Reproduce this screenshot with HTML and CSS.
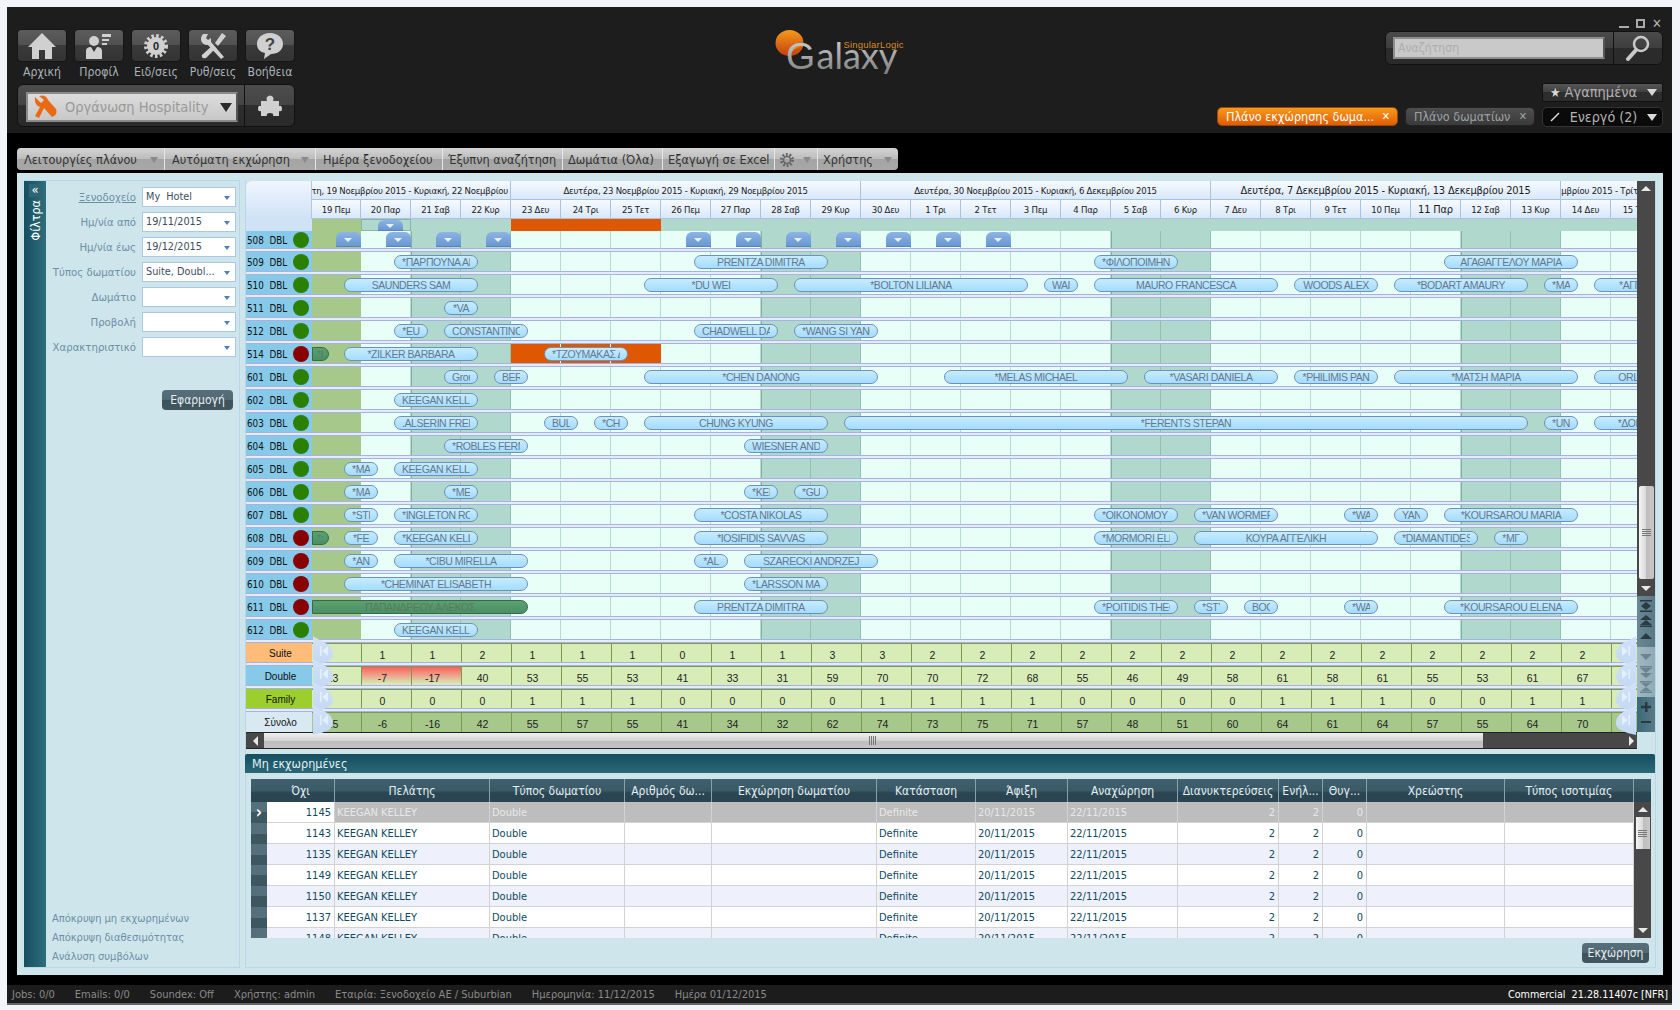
FILE: index.html
```html
<!DOCTYPE html>
<html lang="el">
<head>
<meta charset="utf-8">
<title>Galaxy</title>
<link rel="stylesheet" href="styles.css">
</head>
<body>
<div class="window">
  <header class="top">
    <div class="top-left">
      <nav class="nav">
        <a class="nav-item"><span class="nav-btn"><svg viewBox="0 0 30 28" width="30" height="28"><path class="ico" d="M15 1 L29 15 L25 15 L25 27 L18 27 L18 18 L12 18 L12 27 L5 27 L5 15 L1 15 Z"/></svg></span>Αρχική</a>
        <a class="nav-item"><span class="nav-btn"><svg viewBox="0 0 30 28" width="30" height="28"><circle class="ico" cx="10" cy="9" r="5"/><path class="ico" d="M2 27 L2 19 Q2 15 7 15 L10 20 L13 15 Q18 15 18 19 L18 27 Z"/><path class="ico" d="M18 2h9v3h-9zM18 7h7v2h-7zM18 11h5v2h-5z"/></svg></span>Προφίλ</a>
        <a class="nav-item"><span class="nav-btn"><svg viewBox="0 0 30 28" width="30" height="28"><circle class="teeth" cx="15" cy="14" r="10"/><circle class="ico" cx="15" cy="14" r="9"/><text class="gear-num" x="15" y="18" text-anchor="middle">0</text></svg></span>Ειδ/σεις</a>
        <a class="nav-item"><span class="nav-btn"><svg viewBox="0 0 30 28" width="30" height="28"><path class="ico" d="M5 2 L10 2 L8 6 L10 8 L13 6 L13 10 L26 25 L23 27 L10 13 Q4 13 3 8 Q3 4 5 2 Z"/><path class="ico" d="M24 1 L28 4 L20 14 L17 11 Z M15 13 L18 16 L8 26 Q5 27 4 25 Q3 23 5 22 Z"/></svg></span>Ρυθ/σεις</a>
        <a class="nav-item"><span class="nav-btn"><svg viewBox="0 0 30 28" width="30" height="28"><path class="ico" d="M15 1 C23 1 28 6 28 12 C28 18 23 22 16 22 L9 27 L10 21 C5 20 2 17 2 12 C2 6 7 1 15 1 Z"/><text class="help" x="15" y="18" text-anchor="middle">?</text></svg></span>Βοήθεια</a>
      </nav>
      <div class="module">
        <div class="module-select">
          <svg viewBox="0 0 26 24" width="26" height="24"><path class="wrench" d="M3 2 L9 8 L12 5 L7 1 Q14 -1 16 5 L24 14 Q26 20 20 22 L12 13 L7 23 L3 21 L8 12 Q2 10 3 2 Z"/></svg>
          <span class="module-name">Οργάνωση Hospitality</span>
          <span class="module-caret"></span>
        </div>
        <div class="module-plugin"><svg viewBox="0 0 24 22" width="24" height="22"><path class="ico" d="M9 2 Q12 -1 15 2 Q16 4 15 6 L21 6 L21 11 Q24 10 24 14 Q24 17 21 16 L21 21 L15 21 Q16 18 12 18 Q8 18 9 21 L3 21 L3 16 Q0 17 0 14 Q0 10 3 11 L3 6 L9 6 Q8 4 9 2 Z"/></svg></div>
      </div>
    </div>
    <div class="logo">
      <svg viewBox="0 0 135 46" width="135" height="46">
        <defs>
          <linearGradient id="sun" x1="0" y1="0" x2="0" y2="1"><stop offset="0" stop-color="#f59a1c"/><stop offset="1" stop-color="#c2400c"/></linearGradient>
          <linearGradient id="steel" x1="0" y1="0" x2="0" y2="1"><stop offset="0" stop-color="#d8d8d8"/><stop offset="1" stop-color="#777"/></linearGradient>
        </defs>
        <ellipse cx="16.500" cy="15" rx="14" ry="13" fill="url(#sun)"/>
        <path d="M17 25 Q25 15 36 18" class="logo-arc"/>
        <text class="logo-g" x="13" y="41" fill="url(#steel)">G</text>
        <text class="logo-word" x="43.500" y="41" fill="url(#steel)">alaxy</text>
        <text class="logo-brand" x="70.500" y="20">SingularLogic</text>
      </svg>
    </div>
    <div class="top-right">
      <div class="winctl"><span class="wc-min"></span><span class="wc-max"></span><span class="wc-close">✕</span></div>
      <div class="search">
        <div class="search-input">Αναζήτηση</div>
        <div class="search-btn"><svg viewBox="0 0 26 26" width="26" height="26"><circle cx="16" cy="9" r="7" class="lens"/><path d="M11 15 L3 24" class="lens-h"/></svg></div>
      </div>
      <div class="fav"><span class="star">★</span><span class="fav-name">Αγαπημένα</span><span class="caret-w"></span></div>
      <div class="tabs">
        <div class="tab tab-on">Πλάνο εκχώρησης δωμα...<span class="tab-x">✕</span></div>
        <div class="tab">Πλάνο δωματίων<span class="tab-x">✕</span></div>
        <div class="active-tab"><svg viewBox="0 0 10 10" width="10" height="10"><path d="M1 9 L9 1" class="pen"/></svg><span>Ενεργό (2)</span><span class="caret-w"></span></div>
      </div>
    </div>
  </header>

  <div class="menu">
    <div class="menu-item">Λειτουργίες πλάνου<span class="caret-g"></span></div>
    <div class="menu-item">Αυτόματη εκχώρηση<span class="caret-g"></span></div>
    <div class="menu-item">Ημέρα ξενοδοχείου</div>
    <div class="menu-item">Έξυπνη αναζήτηση</div>
    <div class="menu-item">Δωμάτια (Όλα)</div>
    <div class="menu-item">Εξαγωγή σε Excel</div>
    <div class="menu-item"><svg viewBox="0 0 14 14" width="14" height="14"><circle class="gear-t" cx="7" cy="7" r="5.500"/><circle class="gear-r" cx="7" cy="7" r="3.500"/></svg><span class="caret-g"></span></div>
    <div class="menu-item">Χρήστης<span class="caret-g"></span></div>
  </div>

  <main class="content">
    <aside class="filters">
      <div class="strip"><span class="strip-arrows">«</span><span class="strip-title">Φίλτρα</span></div>
      <div class="filter-panel">
        <div class="form">
          <a class="flabel link">Ξενοδοχείο</a><div class="fselect">My&nbsp; Hotel</div>
          <span class="flabel">Ημ/νία από</span><div class="fselect">19/11/2015</div>
          <span class="flabel">Ημ/νία έως</span><div class="fselect">19/12/2015</div>
          <span class="flabel">Τύπος δωματίου</span><div class="fselect">Suite, Doubl...</div>
          <span class="flabel">Δωμάτιο</span><div class="fselect"></div>
          <span class="flabel">Προβολή</span><div class="fselect"></div>
          <span class="flabel">Χαρακτηριστικό</span><div class="fselect"></div>
        </div>
        <button class="apply btn">Εφαρμογή</button>
        <div class="links">
          <a>Απόκρυψη μη εκχωρημένων</a>
          <a>Απόκρυψη διαθεσιμότητας</a>
          <a>Ανάλυση συμβόλων</a>
        </div>
      </div>
    </aside>

    <section class="main">
      <div class="sched">
        <div class="board">
          <div class="cal-head">
            <div class="corner"></div>
            <div class="week w4"><span>Πέμπτη, 19 Νοεμβρίου 2015 - Κυριακή, 22 Νοεμβρίου 2015</span></div>
            <div class="week w7"><span>Δευτέρα, 23 Νοεμβρίου 2015 - Κυριακή, 29 Νοεμβρίου 2015</span></div>
            <div class="week w7"><span>Δευτέρα, 30 Νοεμβρίου 2015 - Κυριακή, 6 Δεκεμβρίου 2015</span></div>
            <div class="week w7 hot"><span>Δευτέρα, 7 Δεκεμβρίου 2015 - Κυριακή, 13 Δεκεμβρίου 2015</span></div>
            <div class="week w2"><span>Δευτέρα, 14 Δεκεμβρίου 2015 - Τρίτη, 15 Δεκεμβρίου 2015</span></div>
            <div class="day">19 Πεμ</div><div class="day">20 Παρ</div><div class="day">21 Σαβ</div><div class="day">22 Κυρ</div>
            <div class="day">23 Δευ</div><div class="day">24 Τρι</div><div class="day">25 Τετ</div><div class="day">26 Πεμ</div><div class="day">27 Παρ</div><div class="day">28 Σαβ</div><div class="day">29 Κυρ</div>
            <div class="day">30 Δευ</div><div class="day">1 Τρι</div><div class="day">2 Τετ</div><div class="day">3 Πεμ</div><div class="day">4 Παρ</div><div class="day">5 Σαβ</div><div class="day">6 Κυρ</div>
            <div class="day">7 Δευ</div><div class="day">8 Τρι</div><div class="day">9 Τετ</div><div class="day">10 Πεμ</div><div class="day hot">11 Παρ</div><div class="day">12 Σαβ</div><div class="day">13 Κυρ</div>
            <div class="day">14 Δευ</div><div class="day">15 Τρι</div>
          </div>

          <div class="lanes">
            <div class="cols">
              <i class="past"></i><i></i><i class="we"></i><i class="we"></i><i></i><i></i><i></i><i></i><i></i><i class="we"></i><i class="we"></i><i></i><i></i><i></i><i></i><i></i><i class="we"></i><i class="we"></i><i></i><i></i><i></i><i></i><i></i><i class="we"></i><i class="we"></i><i></i><i></i>
            </div>
            <div class="rows">
              <div class="row row-first">
                <div class="room"><span>508&nbsp; DBL</span><em class="dot ok"></em></div>
                <div class="track">
                  <div class="strip-band"></div>
                  <div class="strip-past"></div>
                  <div class="strip-hold"></div>
                  <div class="strip-busy"></div>
                  <b class="drop drop-up" style="--d:1"></b>
                  <b class="drop" style="--d:0"></b><b class="drop" style="--d:1"></b><b class="drop" style="--d:2"></b><b class="drop" style="--d:3"></b>
                  <b class="drop" style="--d:7"></b><b class="drop" style="--d:8"></b><b class="drop" style="--d:9"></b><b class="drop" style="--d:10"></b><b class="drop" style="--d:11"></b><b class="drop" style="--d:12"></b><b class="drop" style="--d:13"></b>
                </div>
              </div>
              <div class="row"><div class="room"><span>509&nbsp; DBL</span><em class="dot ok"></em></div><div class="track">
                <span class="pill" style="--s:1;--e:2">*ΠΑΡΠΟΥΝΑ ΑΙ</span><span class="pill" style="--s:7;--e:9">PRENTZA DIMITRA</span><span class="pill" style="--s:15;--e:16">*ΦΙΛΟΠΟΙΜΗΝ</span><span class="pill" style="--s:22;--e:24">ΑΓΑΘΑΓΓΕΛΟΥ ΜΑΡΙΑ</span>
              </div></div>
              <div class="row"><div class="room"><span>510&nbsp; DBL</span><em class="dot ok"></em></div><div class="track">
                <span class="pill" style="--s:0;--e:2">SAUNDERS SAM</span><span class="pill" style="--s:6;--e:8">*DU WEI</span><span class="pill" style="--s:9;--e:13">*BOLTON LILIANA</span><span class="pill" style="--s:14;--e:14">WAI</span><span class="pill" style="--s:15;--e:18">MAURO FRANCESCA</span><span class="pill" style="--s:19;--e:20">WOODS ALEX</span><span class="pill" style="--s:21;--e:23">*BODART AMAURY</span><span class="pill" style="--s:24;--e:24">*ΜΑ</span><span class="pill" style="--s:25;--e:26">*ΑΓΓΕΛ</span>
              </div></div>
              <div class="row"><div class="room"><span>511&nbsp; DBL</span><em class="dot ok"></em></div><div class="track">
                <span class="pill" style="--s:2;--e:2">*VA</span>
              </div></div>
              <div class="row"><div class="room"><span>512&nbsp; DBL</span><em class="dot ok"></em></div><div class="track">
                <span class="pill" style="--s:1;--e:1">*EU</span><span class="pill" style="--s:2;--e:3">CONSTANTINO</span><span class="pill" style="--s:7;--e:8">CHADWELL DA</span><span class="pill" style="--s:9;--e:10">*WANG SI YANG</span>
              </div></div>
              <div class="row"><div class="room"><span>514&nbsp; DBL</span><em class="dot bad"></em></div><div class="track">
                <div class="busy-514"></div>
                <span class="pill pill-stub">*Ι</span><span class="pill" style="--s:0;--e:2">*ZILKER BARBARA</span><span class="pill" style="--s:4;--e:5">*ΤΖΟΥΜΑΚΑΣ Δ</span>
              </div></div>
              <div class="row"><div class="room"><span>601&nbsp; DBL</span><em class="dot ok"></em></div><div class="track">
                <span class="pill" style="--s:2;--e:2">Grou</span><span class="pill" style="--s:3;--e:3">BER</span><span class="pill" style="--s:6;--e:10">*CHEN DANONG</span><span class="pill" style="--s:12;--e:15">*MELAS MICHAEL</span><span class="pill" style="--s:16;--e:18">*VASARI DANIELA</span><span class="pill" style="--s:19;--e:20">*PHILIMIS PAN</span><span class="pill" style="--s:21;--e:24">*ΜΑΤΣΗ ΜΑΡΙΑ</span><span class="pill" style="--s:25;--e:26">ORLY R</span>
              </div></div>
              <div class="row"><div class="room"><span>602&nbsp; DBL</span><em class="dot ok"></em></div><div class="track">
                <span class="pill" style="--s:1;--e:2">KEEGAN KELLE</span>
              </div></div>
              <div class="row"><div class="room"><span>603&nbsp; DBL</span><em class="dot ok"></em></div><div class="track">
                <span class="pill" style="--s:1;--e:2">.ALSERIN FREI</span><span class="pill" style="--s:4;--e:4">BUL</span><span class="pill" style="--s:5;--e:5">*CH</span><span class="pill" style="--s:6;--e:9">CHUNG KYUNG</span><span class="pill" style="--s:10;--e:23">*FERENTS STEPAN</span><span class="pill" style="--s:24;--e:24">*UN</span><span class="pill" style="--s:25;--e:26">*ΔΟΝΤΑ</span>
              </div></div>
              <div class="row"><div class="room"><span>604&nbsp; DBL</span><em class="dot ok"></em></div><div class="track">
                <span class="pill" style="--s:2;--e:3">*ROBLES FERN</span><span class="pill" style="--s:8;--e:9">WIESNER AND</span>
              </div></div>
              <div class="row"><div class="room"><span>605&nbsp; DBL</span><em class="dot ok"></em></div><div class="track">
                <span class="pill" style="--s:0;--e:0">*ΜΑ</span><span class="pill" style="--s:1;--e:2">KEEGAN KELLE</span>
              </div></div>
              <div class="row"><div class="room"><span>606&nbsp; DBL</span><em class="dot ok"></em></div><div class="track">
                <span class="pill" style="--s:0;--e:0">*ΜΑ</span><span class="pill" style="--s:2;--e:2">*ME</span><span class="pill" style="--s:8;--e:8">*KEI</span><span class="pill" style="--s:9;--e:9">*GU</span>
              </div></div>
              <div class="row"><div class="room"><span>607&nbsp; DBL</span><em class="dot ok"></em></div><div class="track">
                <span class="pill" style="--s:0;--e:0">*STI</span><span class="pill" style="--s:1;--e:2">*INGLETON RO</span><span class="pill" style="--s:7;--e:9">*COSTA NIKOLAS</span><span class="pill" style="--s:15;--e:16">*OIKONOMOY H</span><span class="pill" style="--s:17;--e:18">*VAN WORMER</span><span class="pill" style="--s:20;--e:20">*WA</span><span class="pill" style="--s:21;--e:21">YAN</span><span class="pill" style="--s:22;--e:24">*KOURSAROU MARIA</span>
              </div></div>
              <div class="row"><div class="room"><span>608&nbsp; DBL</span><em class="dot bad"></em></div><div class="track">
                <span class="pill pill-stub">*:</span><span class="pill" style="--s:0;--e:0">*FE</span><span class="pill" style="--s:1;--e:2">*KEEGAN KELLI</span><span class="pill" style="--s:7;--e:9">*IOSIFIDIS SAVVAS</span><span class="pill" style="--s:15;--e:16">*MORMORI ELI</span><span class="pill" style="--s:17;--e:20">ΚΟΥΡΑ ΑΓΓΕΛΙΚΗ</span><span class="pill" style="--s:21;--e:22">*DIAMANTIDES</span><span class="pill" style="--s:23;--e:23">*ΜΓ</span>
              </div></div>
              <div class="row"><div class="room"><span>609&nbsp; DBL</span><em class="dot bad"></em></div><div class="track">
                <span class="pill" style="--s:0;--e:0">*AN</span><span class="pill" style="--s:1;--e:3">*CIBU MIRELLA</span><span class="pill" style="--s:7;--e:7">*AL</span><span class="pill" style="--s:8;--e:10">SZARECKI ANDRZEJ</span>
              </div></div>
              <div class="row"><div class="room"><span>610&nbsp; DBL</span><em class="dot bad"></em></div><div class="track">
                <span class="pill" style="--s:0;--e:3">*CHEMINAT ELISABETH</span><span class="pill" style="--s:8;--e:9">*LARSSON MA</span>
              </div></div>
              <div class="row"><div class="room"><span>611&nbsp; DBL</span><em class="dot bad"></em></div><div class="track">
                <span class="pill pill-in">ΠΑΠΑΝΔΡΕΟΥ ΑΛΕΚΟΣ</span><span class="pill" style="--s:7;--e:9">PRENTZA DIMITRA</span><span class="pill" style="--s:15;--e:16">*POITIDIS THEO</span><span class="pill" style="--s:17;--e:17">*STY</span><span class="pill" style="--s:18;--e:18">BOG</span><span class="pill" style="--s:20;--e:20">*WA</span><span class="pill" style="--s:22;--e:24">*KOURSAROU ELENA</span>
              </div></div>
              <div class="row"><div class="room"><span>612&nbsp; DBL</span><em class="dot ok"></em></div><div class="track">
                <span class="pill" style="--s:1;--e:2">KEEGAN KELLE</span>
              </div></div>
            </div>
          </div>

          <div class="totals">
            <div class="row trow"><div class="tname t-suite">Suite</div><div class="tvals">
              <u></u><u>1</u><u>1</u><u>2</u><u>1</u><u>1</u><u>1</u><u>0</u><u>1</u><u>1</u><u>3</u><u>3</u><u>2</u><u>2</u><u>2</u><u>2</u><u>2</u><u>2</u><u>2</u><u>2</u><u>2</u><u>2</u><u>2</u><u>2</u><u>2</u><u>2</u><u></u>
              <span class="edge edge-l"><svg viewBox="0 0 8 10" width="8" height="10"><path d="M0 0h1.500v10h-1.500zM8 0v10L2.500 5z"/></svg></span><span class="edge edge-r"><svg viewBox="0 0 8 10" width="8" height="10"><path d="M8 0h-1.500v10h1.500zM0 0v10L5.500 5z"/></svg></span>
            </div></div>
            <div class="row trow"><div class="tname t-double">Double</div><div class="tvals">
              <u>23</u><u class="neg">-7</u><u class="neg">-17</u><u>40</u><u>53</u><u>55</u><u>53</u><u>41</u><u>33</u><u>31</u><u>59</u><u>70</u><u>70</u><u>72</u><u>68</u><u>55</u><u>46</u><u>49</u><u>58</u><u>61</u><u>58</u><u>61</u><u>55</u><u>53</u><u>61</u><u>67</u><u></u>
              <span class="edge edge-l"><svg viewBox="0 0 8 10" width="8" height="10"><path d="M0 0h1.500v10h-1.500zM8 0v10L2.500 5z"/></svg></span><span class="edge edge-r"><svg viewBox="0 0 8 10" width="8" height="10"><path d="M8 0h-1.500v10h1.500zM0 0v10L5.500 5z"/></svg></span>
            </div></div>
            <div class="row trow"><div class="tname t-family">Family</div><div class="tvals">
              <u></u><u>0</u><u>0</u><u>0</u><u>1</u><u>1</u><u>1</u><u>0</u><u>0</u><u>0</u><u>0</u><u>1</u><u>1</u><u>1</u><u>1</u><u>0</u><u>0</u><u>0</u><u>0</u><u>1</u><u>1</u><u>1</u><u>0</u><u>0</u><u>1</u><u>1</u><u></u>
              <span class="edge edge-l"><svg viewBox="0 0 8 10" width="8" height="10"><path d="M0 0h1.500v10h-1.500zM8 0v10L2.500 5z"/></svg></span><span class="edge edge-r"><svg viewBox="0 0 8 10" width="8" height="10"><path d="M8 0h-1.500v10h1.500zM0 0v10L5.500 5z"/></svg></span>
            </div></div>
            <div class="row trow trow-sum"><div class="tname t-sum">Σύνολο</div><div class="tvals">
              <u>25</u><u>-6</u><u>-16</u><u>42</u><u>55</u><u>57</u><u>55</u><u>41</u><u>34</u><u>32</u><u>62</u><u>74</u><u>73</u><u>75</u><u>71</u><u>57</u><u>48</u><u>51</u><u>60</u><u>64</u><u>61</u><u>64</u><u>57</u><u>55</u><u>64</u><u>70</u><u></u>
              <span class="edge edge-l"><svg viewBox="0 0 8 10" width="8" height="10"><path d="M0 0h1.500v10h-1.500zM8 0v10L2.500 5z"/></svg></span><span class="edge edge-r"><svg viewBox="0 0 8 10" width="8" height="10"><path d="M8 0h-1.500v10h1.500zM0 0v10L5.500 5z"/></svg></span>
            </div></div>
          </div>

          <div class="hscroll">
            <span class="harrow"><span class="tri-l"></span></span>
            <span class="hthumb"><span class="grip-v"></span></span>
            <span class="hend"><span class="tri-r"></span></span>
          </div>
        </div>

        <div class="rail">
          <div class="vscroll">
            <span class="tri-u"></span>
            <span class="vthumb"><span class="grip-h"></span></span>
            <span class="tri-d"></span>
          </div>
          <div class="tools">
            <div class="tool-set tool-dark">
              <svg viewBox="0 0 12 12" width="12" height="12"><path class="tool" d="M0 0h12v1.500H0zM6 2l5 4H1zM6 10L1 6h10zM0 10.500h12V12H0z"/></svg>
              <svg viewBox="0 0 12 12" width="12" height="12"><path class="tool" d="M6 0l6 5H0zM6 5l6 5H0zM0 10.500h12V12H0z"/></svg>
              <svg viewBox="0 0 12 12" width="12" height="12"><path class="tool" d="M6 2l6 6H0z"/></svg>
            </div>
            <div class="tool-set tool-light">
              <svg viewBox="0 0 12 12" width="12" height="12"><path class="tool" d="M6 10L0 4h12z"/></svg>
              <svg viewBox="0 0 12 12" width="12" height="12"><path class="tool" d="M0 0h12v1.500H0zM6 7L0 2h12zM6 12L0 7h12z"/></svg>
              <svg viewBox="0 0 12 12" width="12" height="12"><path class="tool" d="M0 0h12v1.500H0zM6 6L1 2h10zM6 6l5 4H1zM0 10.500h12V12H0z"/></svg>
            </div>
            <div class="tool-set tool-zoom">
              <svg viewBox="0 0 12 12" width="12" height="12"><path class="tool" d="M5 1h2.500v3.800H11v2.500H7.500V11H5V7.300H1V4.800h4z"/></svg>
              <svg viewBox="0 0 12 12" width="12" height="12"><path class="tool" d="M1 5h10v2H1z"/></svg>
            </div>
          </div>
        </div>
      </div>

      <h2 class="sub-head">Μη εκχωρημένες</h2>

      <div class="ugrid">
        <table class="utable">
          <colgroup>
            <col class="c-rh"><col class="c-no"><col class="c-guest"><col class="c-type"><col class="c-num"><col class="c-assign"><col class="c-state"><col class="c-arr"><col class="c-dep"><col class="c-nights"><col class="c-ad"><col class="c-ch"><col class="c-deb"><col class="c-rate"><col class="c-sb">
          </colgroup>
          <thead>
            <tr><th></th><th>Όχι</th><th>Πελάτης</th><th>Τύπος δωματίου</th><th>Αριθμός δω...</th><th>Εκχώρηση δωματίου</th><th>Κατάσταση</th><th>Άφιξη</th><th>Αναχώρηση</th><th>Διανυκτερεύσεις</th><th>Ενήλ...</th><th>Θυγ...</th><th>Χρεώστης</th><th>Τύπος ισοτιμίας</th><th></th></tr>
          </thead>
          <tbody>
            <tr class="sel"><td class="rh"><span class="chev">›</span></td><td class="num no">1145</td><td>KEEGAN KELLEY</td><td>Double</td><td></td><td></td><td>Definite</td><td>20/11/2015</td><td>22/11/2015</td><td class="num">2</td><td class="num">2</td><td class="num">0</td><td></td><td></td>
              <td class="sb-cell" rowspan="7"><div class="uscroll"><span class="tri-u"></span><span class="uthumb"><span class="grip-h"></span></span><span class="tri-d"></span></div></td></tr>
            <tr><td class="rh"></td><td class="num no">1143</td><td>KEEGAN KELLEY</td><td>Double</td><td></td><td></td><td>Definite</td><td>20/11/2015</td><td>22/11/2015</td><td class="num">2</td><td class="num">2</td><td class="num">0</td><td></td><td></td></tr>
            <tr class="alt"><td class="rh"></td><td class="num">1135</td><td>KEEGAN KELLEY</td><td>Double</td><td></td><td></td><td>Definite</td><td>20/11/2015</td><td>22/11/2015</td><td class="num">2</td><td class="num">2</td><td class="num">0</td><td></td><td></td></tr>
            <tr><td class="rh"></td><td class="num">1149</td><td>KEEGAN KELLEY</td><td>Double</td><td></td><td></td><td>Definite</td><td>20/11/2015</td><td>22/11/2015</td><td class="num">2</td><td class="num">2</td><td class="num">0</td><td></td><td></td></tr>
            <tr class="alt"><td class="rh"></td><td class="num">1150</td><td>KEEGAN KELLEY</td><td>Double</td><td></td><td></td><td>Definite</td><td>20/11/2015</td><td>22/11/2015</td><td class="num">2</td><td class="num">2</td><td class="num">0</td><td></td><td></td></tr>
            <tr><td class="rh"></td><td class="num">1137</td><td>KEEGAN KELLEY</td><td>Double</td><td></td><td></td><td>Definite</td><td>20/11/2015</td><td>22/11/2015</td><td class="num">2</td><td class="num">2</td><td class="num">0</td><td></td><td></td></tr>
            <tr class="alt"><td class="rh"></td><td class="num">1148</td><td>KEEGAN KELLEY</td><td>Double</td><td></td><td></td><td>Definite</td><td>20/11/2015</td><td>22/11/2015</td><td class="num">2</td><td class="num">2</td><td class="num">0</td><td></td><td></td></tr>
          </tbody>
        </table>
      </div>
      <div class="ufoot"><button class="btn">Εκχώρηση</button></div>
    </section>
  </main>

  <footer class="status">
    <span>Jobs: 0/0</span><span>Emails: 0/0</span><span>Soundex: Off</span><span>Χρήστης: admin</span><span>Εταιρία: Ξενοδοχείο AE / Suburbian</span><span>Ημερομηνία: 11/12/2015</span><span>Ημέρα 01/12/2015</span>
    <strong class="version">Commercial&nbsp; 21.28.11407c [NFR]</strong>
  </footer>
</div>
</body>
</html>
```
FILE: styles.css
```css
* { box-sizing: border-box; }
html, body { margin: 0; height: 100%; }
body {
  background: #f2f4fa;
  padding: 7px 8px 7px 7px;
  font-family: "DejaVu Sans", "Liberation Sans", sans-serif;
  font-stretch: condensed;
  font-size: 11px;
  overflow: hidden;
}
.window {
  height: 996px;
  background: #000;
  display: flex;
  flex-direction: column;
  box-shadow: 0 2px 0 #666;
}

/* header */
.top {
  height: 126px;
  flex: none;
  background: #1d1d1d;
  display: grid;
  grid-template-columns: 1fr auto 1fr;
  padding: 0 9px 0 10px;
}
.nav { display: flex; gap: 7px; margin-top: 22px; }
.nav-item { width: 50px; color: #a9b1b6; font-size: 12.200px; text-align: center; white-space: nowrap; display: flex; flex-direction: column; align-items: center; line-height: 18px; }
.nav-btn {
  width: 50px; height: 33px; margin-bottom: 1px; flex: none;
  border-radius: 4px; border: 1px solid #151515;
  background: linear-gradient(#5c5c5c 0, #505050 50%, #3a3a3a 50%, #333 100%);
  display: flex; align-items: center; justify-content: center;
}
.ico { fill: #d0d0d0; }
.help { font: bold 17px "Liberation Sans", sans-serif; fill: #444; }
.teeth { fill: none; stroke: #d0d0d0; stroke-width: 4; stroke-dasharray: 2.500 2.200; }
.gear-num { font: bold 11px "Liberation Sans", sans-serif; fill: #222; }
.module {
  margin-top: 3px; width: 278px; height: 43px;
  display: flex;
  background: linear-gradient(#4c4c4c 0, #444 50%, #2e2e2e 50%, #2a2a2a 100%);
  border: 1px solid #111; border-radius: 6px;
}
.module-select {
  margin: 7px 0 4px 8px; width: 212px; height: 30px;
  background: linear-gradient(#dcdcdc, #c8c8c8);
  border: 2px solid #8a8a8a; border-right-color: #555;
  display: flex; align-items: center; padding-left: 4px;
}
.wrench { fill: #ea6a14; }
.module-name { margin-left: 7px; color: #999; font-size: 14.500px; flex: 1; white-space: nowrap; }
.module-caret { width: 0; height: 0; border-left: 6px solid transparent; border-right: 6px solid transparent; border-top: 9px solid #2a2a2a; margin-right: 4px; }
.module-plugin { margin-left: 6px; flex: 1; border-left: 1px solid #111; display: flex; align-items: center; justify-content: center; }

.logo { padding-top: 21px; }
.logo-g { font: 37.500px "Liberation Sans", sans-serif; }
.logo-word { font: 400 36px Lato, "Liberation Sans", sans-serif; }
.logo-brand { font: 9.500px "Liberation Sans", sans-serif; fill: #d88a2a; letter-spacing: .2px; }
.logo-arc { fill: none; stroke: #e88a20; stroke-width: 1.500; }

.top-right { display: flex; flex-direction: column; align-items: flex-end; }
.winctl { display: flex; gap: 7px; height: 24px; align-items: center; color: #b5b5b5; padding-top: 8px; }
.wc-min { width: 10px; height: 9px; border-bottom: 2px solid #aaa; }
.wc-max { width: 9px; height: 9px; border: 2px solid #aaa; }
.wc-close { font-size: 13px; line-height: 9px; width: 11px; }
.search {
  margin-top: 0; width: 278px; height: 34px;
  display: flex; align-items: center;
  background: linear-gradient(#4a4a4a 0, #3e3e3e 50%, #2c2c2c 50%, #2a2a2a 100%);
  border: 1px solid #111; border-radius: 6px;
  padding-left: 7px;
}
.search-input {
  width: 212px; height: 22px;
  background: #c9c9c9; border: 2px solid #8e8e8e; border-right-color: #555;
  color: #aeaeae; font-size: 12.200px; line-height: 18px; padding-left: 3px;
}
.search-btn { margin-left: 8px; flex: 1; align-self: stretch; border-left: 1px solid #111; display: flex; align-items: center; justify-content: center; }
.lens { fill: none; stroke: #c9c9c9; stroke-width: 2.500; }
.lens-h { stroke: #c9c9c9; stroke-width: 4; stroke-linecap: round; }
.fav {
  margin-top: 18px; width: 121px; height: 19px;
  background: linear-gradient(#555, #3f3f3f 50%, #2e2e2e 50%, #2c2c2c);
  border: 1px solid #111; border-radius: 2px;
  color: #b2b2b2; font-size: 14.500px; line-height: 17px;
  display: flex; align-items: center; padding: 0 5px 0 7px;
}
.star { color: #d8d8d8; font-size: 13px; }
.fav-name { margin-left: 4px; }
.fav .caret-w { margin-left: auto; }
.caret-w { width: 0; height: 0; border-left: 5px solid transparent; border-right: 5px solid transparent; border-top: 7px solid #d8d8d8; }
.tabs { margin-top: 5px; display: flex; gap: 7px; }
.tab {
  height: 19px; padding: 0 7px 0 8px; width: 130px;
  background: linear-gradient(#4e4e4e, #3a3a3a);
  border: 1px solid #222; border-radius: 5px;
  color: #9ca2a6; font-size: 12.500px; line-height: 17px; white-space: nowrap;
  display: flex; justify-content: space-between; align-items: center;
}
.tab-on {
  width: 181px; color: #fff;
  background: linear-gradient(#f79a1c, #e15b05);
  border-color: #9a4a08;
}
.tab-x { font-size: 11px; }
.tab-on .tab-x { color: #fff; font-size: 11px; }
.active-tab {
  width: 121px; height: 20px; padding: 0 5px 0 7px;
  background: #0a0a0a; border: 1px solid #333; border-radius: 5px;
  color: #b2b2b2; font-size: 14.200px;
  display: flex; align-items: center; justify-content: space-between;
}
.pen { stroke: #ddd; stroke-width: 1.400; }

/* menu */
.menu {
  margin: 15px 0 0 10px; height: 21px; flex: none;
  display: grid;
  grid-template-columns: 147px 151px 127px 120px 100px 112px 43px 81px;
  width: 881px;
}
.menu-item {
  background: linear-gradient(#d4d4d4, #bcbcbc 50%, #a4a4a4 50%, #a8a8a8);
  border-left: 1px solid #e6e6e6;
  color: #333; font-size: 12.600px; line-height: 20px; padding: 2px 6px 0 5px; white-space: nowrap;
  display: flex; justify-content: space-between; align-items: center;
}
.menu-item:first-child { border-radius: 4px 0 0 4px; border-left: 0; padding-left: 7px; }
.menu-item:last-child { border-radius: 0 4px 4px 0; }
.menu-item:nth-child(2), .menu-item:nth-child(3) { padding-left: 7px; }
.caret-g { width: 0; height: 0; border-left: 4px solid transparent; border-right: 4px solid transparent; border-top: 6px solid #8a8a8a; }
.gear-t { fill: none; stroke: #666; stroke-width: 3; stroke-dasharray: 1.800 1.650; }
.gear-r { fill: none; stroke: #666; stroke-width: 1.500; }

/* content */
.content {
  margin: 4px 9px 0 10px; height: 802px; flex: none;
  background: #cfe5ec;
  padding: 7px;
  display: flex;
  gap: 5px;
}
.filters { width: 216px; flex: none; display: flex; border: 1px solid #b9d6ea; border-left: 0; border-top: 1px solid #b9d6ea; }
.strip {
  width: 22px; flex: none;
  background: linear-gradient(90deg, #154f5f, #2f6e7c);
  color: #fff; display: flex; flex-direction: column; align-items: center;
}
.strip-arrows { font-size: 13px; background: #2f6473; width: 12px; text-align: center; margin-top: 3px; height: 13px; line-height: 11px; }
.strip-title { writing-mode: vertical-rl; transform: rotate(180deg); font-size: 12.500px; margin-top: 3px; }
.filter-panel { flex: 1; display: flex; flex-direction: column; min-width: 0; }
.form {
  padding-top: 6px;
  display: grid; grid-template-columns: 90px 94px; column-gap: 6px; row-gap: 5px;
}
.flabel { color: #6d8fa6; font-size: 11.300px; text-align: right; line-height: 22px; height: 20px; white-space: nowrap; }
.link { text-decoration: underline; }
.fselect {
  height: 20px; background: #fff; border: 1px solid #aac8e2;
  color: #3e4e60; font-size: 10.800px; line-height: 17px; padding-left: 3px; white-space: nowrap;
  position: relative;
}
.fselect::after {
  content: ""; position: absolute; right: 5px; top: 8px;
  border-left: 3px solid transparent; border-right: 3px solid transparent; border-top: 4px solid #4a80c0;
}
.btn {
  width: 67px; height: 20px; padding: 0; border: 0; border-radius: 4px;
  background: linear-gradient(#586e7a 0, #526873 50%, #3e525c 50%, #425660 100%);
  color: #e6eef2; font: inherit; font-size: 12px; font-stretch: condensed;
}
.apply { width: 71px; align-self: flex-end; margin: 33px 6px 0 0; }
.links { margin-top: auto; padding: 0 0 1px 6px; display: flex; flex-direction: column; color: #6d8fa6; font-size: 11px; line-height: 19px; }

.main { flex: 1; min-width: 0; display: flex; flex-direction: column; border: 1px solid #b9d6ea; border-top: 0; border-left-width: 1px; }
.sched { display: flex; height: 568px; flex: none; margin-top: 1px; }
.board { width: 1391px; flex: none; overflow: hidden; }

.cal-head {
  display: grid; grid-template-columns: 66px 49px repeat(26, 50px); grid-template-rows: 19px 19px;
  width: 1415px;
}
.corner { grid-row: 1 / 3; background: linear-gradient(#f0f6fe, #cfe2f6); border-top-left-radius: 6px; border-right: 1px solid #b0c8e4; }
.week, .day {
  background: linear-gradient(#f6faff, #d9e8fa);
  border-right: 1px solid #a8c2e2; border-bottom: 1px solid #a8c2e2;
  color: #1c1c1c; font-size: 9.500px; letter-spacing: -.25px; white-space: nowrap; overflow: hidden;
  display: flex; align-items: center; justify-content: center;
}
.week { padding-top: 1px; }
.w4 { grid-column: span 4; }
.w7 { grid-column: span 7; }
.w2 { grid-column: span 2; }
.week.hot, .day.hot { font-size: 11px; letter-spacing: -.2px; }

.lanes { display: grid; height: 424px; }
.cols, .rows { grid-area: 1 / 1; }
.cols { display: flex; margin-left: 66px; width: 1349px; }
.cols i { width: 50px; flex: none; background: #e8fff8; border-right: 1px solid #b6dcd0; }
.cols i.we { background: #b0d8cc; border-right-color: #8fc0b0; }
.cols i:nth-child(3), .cols i:nth-child(10), .cols i:nth-child(17), .cols i:nth-child(24) { box-shadow: inset 1px 0 #7fb0a0; }
.cols i.past { width: 49px; background: #a6c88a; border-right: 0; }
.rows { z-index: 1; }
.row {
  display: grid; grid-template-columns: 66px 1fr; grid-template-rows: 19px 4px;
}
.row::after {
  content: ""; grid-column: 1 / 3;
  background: #e6eafa; border-top: 1px solid #a4b4e0; border-bottom: 1px solid #a4b4e0;
}
.row-first { grid-template-rows: 29px 4px; }
.room {
  background: #86c9e8; color: #111;
  display: flex; align-items: center; justify-content: space-between;
  padding: 0 0 0 1px; font-size: 9.800px; white-space: nowrap;
}
.room span { padding-top: 1px; }
.row-first .room { background: linear-gradient(#cfe2f6 12px, #86c9e8 12px); padding-top: 12px; }
.dot { width: 16px; height: 16px; border-radius: 50%; margin-right: 3px; }
.ok { background: #2b8000; }
.bad { background: #880000; }
.track { position: relative; min-width: 0; }
.pill {
  position: absolute; top: 3px; height: 14px;
  left: calc(var(--s) * 50px + 32px);
  width: calc((var(--e) - var(--s)) * 50px + 34px);
  background: linear-gradient(#c6ecff, #a4dcff);
  border: 1px solid #7090b8; border-radius: 7px;
  font: 10.500px/13px "Liberation Sans", sans-serif; letter-spacing: -.45px; color: #66788e;
  text-align: center; white-space: nowrap;
  padding: 0 7px;
  overflow: clip; overflow-clip-margin: content-box;
}
.pill-in, .pill-stub {
  left: 0; border-radius: 0 7px 7px 0;
  background: linear-gradient(#5aa070, #4b9064); border-color: #356a4a; color: #5c7a60;
}
.pill-in { width: 216px; }
.pill-stub { width: 17px; padding: 0 0 0 4px; text-align: left; }
.strip-band { position: absolute; left: 0; right: 0; top: 0; height: 12px; background: #b0d8cc; }
.strip-past { position: absolute; left: 0; width: 49px; top: 0; height: 29px; background: #a6c88a; }
.strip-hold { position: absolute; left: 49px; width: 50px; top: 0; height: 12px; border: 1px solid #86b8a6; }
.strip-busy { position: absolute; left: 199px; width: 150px; top: 0; height: 12px; background: #df5800; }
.drop {
  position: absolute; top: 13px; height: 15px; width: 25px;
  left: calc(var(--d) * 50px + 24px);
  background: linear-gradient(#8db4e4, #6a98d2);
  border-radius: 6px 6px 0 0; border-bottom: 1px solid #5a84b8;
}
.drop::after {
  content: ""; position: absolute; left: 8px; top: 6px;
  border-left: 4px solid transparent; border-right: 4px solid transparent; border-top: 4px solid #e8f2ff;
}
.drop-up { top: 1px; height: 11px; left: 66px; }
.drop-up::after { top: 4px; }
.busy-514 { position: absolute; left: 199px; width: 150px; top: 0; height: 19px; background: linear-gradient(90deg, #df5800 49px, #fff 49px, #fff 50px, #df5800 50px, #df5800 99px, #fff 99px, #fff 100px, #df5800 100px); }

.trow-sum { grid-template-rows: 20px 0; }
.trow-sum::after { display: none; }
.tname { font: 10px/21px "Liberation Sans", sans-serif; color: #111; text-align: center; padding-left: 3px; }
.t-suite { background: #ffbb78; }
.t-double { background: #86c9e8; }
.t-family { background: #9ccf2e; }
.t-sum { background: #d9e9f2; }
.tvals { position: relative; display: flex; min-width: 0; }
.tvals u {
  width: 50px; flex: none; text-decoration: none;
  background: #d8ecb8; border-top: 1px solid #7a9a50; border-left: 1px solid #7a9a50;
  font: 10.500px/23px "Liberation Sans", sans-serif; color: #222;
  text-align: center; padding-right: 8px; overflow: hidden;
}
.tvals u:first-child { width: 49px; border-left: 0; }
.tvals u.neg { background: linear-gradient(#ff5e5e, #d8ecb8 95%); }
.trow-sum u { background: #a6c88a; }
.edge {
  position: absolute; top: -7px; width: 21px; height: 30px;
  background: linear-gradient(#d2e2f8, #c2d8f2);
  display: flex; align-items: center; justify-content: center;
  z-index: 2;
}
.edge svg { fill: #e4f0fc; }
.edge-l { left: 1px; clip-path: path('M0 0 C6 5 20 7 20 18 C20 26 8 28 0 30 Z'); }
.edge-r { left: 1303px; clip-path: path('M21 0 C15 5 1 7 1 18 C1 26 13 28 21 30 Z'); }

.hscroll { height: 17px; background: #484848; display: flex; border-top: 1px solid #222; border-bottom: 1px solid #222; }
.harrow { width: 18px; display: flex; align-items: center; justify-content: center; }
.hthumb {
  width: 1219px;
  background: linear-gradient(#f0f0f0, #d4d4d4 50%, #bebebe 50%, #c4c4c4);
  display: flex; justify-content: center; align-items: center;
}
.grip-v { width: 7px; height: 9px; background: repeating-linear-gradient(90deg, #777 0 1px, transparent 1px 2px); margin-right: 2px; }
.hend { flex: 1; display: flex; align-items: center; justify-content: flex-end; padding-right: 3px; }
.tri-l { border-top: 5px solid transparent; border-bottom: 5px solid transparent; border-right: 5px solid #e8e8e8; }
.tri-r { border-top: 5px solid transparent; border-bottom: 5px solid transparent; border-left: 5px solid #e8e8e8; }
.tri-u { flex: none; margin-top: 5px; border-left: 5px solid transparent; border-right: 5px solid transparent; border-bottom: 5px solid #e8e8e8; }
.tri-d { flex: none; margin: 7px 0 5px; border-left: 5px solid transparent; border-right: 5px solid transparent; border-top: 5px solid #e8e8e8; }

.rail { flex: 1; display: flex; flex-direction: column; }
.vscroll { height: 415px; width: 18px; background: #484848; display: flex; flex-direction: column; align-items: center; }
.vthumb {
  margin-top: auto; width: 15px; height: 93px; flex: none;
  background: linear-gradient(90deg, #f4f4f4, #d8d8d8 50%, #bebebe 50%, #c8c8c8);
  display: flex; align-items: center; justify-content: center; border-radius: 2px;
}
.grip-h { width: 9px; height: 7px; background: repeating-linear-gradient(#777 0 1px, transparent 1px 2px); }
.tools { height: 136px; display: flex; flex-direction: column; }
.tool-set { flex: 51 0 0; display: flex; flex-direction: column; align-items: center; justify-content: space-around; padding: 2px 0; }
.tool-dark { background: linear-gradient(90deg, #6a8794, #5a7885); }
.tool-light { background: linear-gradient(90deg, #a0b8c2, #90aab6); }
.tool-zoom { flex: 34 0 0; background: linear-gradient(90deg, #3a6a78, #5a7a88); }
.tool { fill: #2a3a42; }
.tool-light .tool { fill: #6a8490; }

.sub-head {
  margin: 5px 0 0 -1px; height: 19px; flex: none;
  background: linear-gradient(#154f60, #2b6775);
  color: #e2f0f4; font-weight: normal; font-size: 12.500px; line-height: 20px; padding-left: 7px;
  border-radius: 2px 2px 0 0;
}
.ugrid { margin: 6px 4px 0 5px; height: 159px; overflow: hidden; flex: none; }
.utable { table-layout: fixed; border-collapse: separate; border-spacing: 0; width: 1400px; font-size: 11px; }
.c-rh { width: 16px; }
.c-no { width: 68px; }
.c-guest { width: 155px; }
.c-type { width: 135px; }
.c-num { width: 87px; }
.c-assign { width: 165px; }
.c-state { width: 99px; }
.c-arr { width: 92px; }
.c-dep { width: 110px; }
.c-nights { width: 101px; }
.c-ad { width: 44px; }
.c-ch { width: 44px; }
.c-deb { width: 138px; }
.c-rate { width: 129px; }
.c-sb { width: 17px; }
.utable th {
  height: 23px; padding: 0 2px; overflow: hidden; white-space: nowrap;
  background: linear-gradient(#40606e 0, #3a5a68 50%, #2a4652 60%, #2a4450 100%);
  color: #e4eef2; font-weight: normal; font-size: 12px; text-align: center;
  border-right: 1px solid #8aa0aa;
}
.utable th:first-child, .utable th:last-child { border-right: 0; }
.utable td {
  height: 21px; padding: 0 2px; overflow: hidden; white-space: nowrap;
  background: #fff; color: #0f4a62;
  border-right: 1px solid #d2d2d2; border-bottom: 1px solid #d2d2d2;
}
.utable tr.alt td { background: #eef0fc; }
.utable tr.sel td { background: #bdbdbd; color: #e8e8e8; }
.utable td.num { text-align: right; padding-right: 3px; }
.utable tr.sel td.no { background: #fff; color: #0f4a62; }
.utable td.rh, .utable tr.sel td.rh, .utable tr.alt td.rh {
  background: linear-gradient(#55707c 0, #55707c 50%, #3e5660 50%, #3e5660 100%);
  border: 0; padding: 0; text-align: center;
}
.chev { color: #fff; font-size: 17px; font-weight: bold; line-height: 17px; }
.utable td.sb-cell { padding: 0; vertical-align: top; border: 0; background: #484848; }
.uscroll { height: 136px; background: #484848; display: flex; flex-direction: column; align-items: center; }
.uthumb {
  margin-top: 5px; width: 14px; height: 32px; flex: none;
  background: linear-gradient(90deg, #f4f4f4, #d8d8d8 50%, #bebebe 50%, #c8c8c8);
  display: flex; align-items: center; justify-content: center;
}
.uscroll .tri-d { margin-top: auto; }
.ufoot { display: flex; justify-content: flex-end; padding: 5px 6px 0 0; }

/* status */
.status {
  margin-top: 10px; height: 18px; flex: none;
  background: #1c1c1c;
  display: flex; gap: 20px; align-items: center; padding: 0 4px 0 5px;
  color: #8a8a8a; font-size: 11px; white-space: nowrap;
}
.version { margin-left: auto; color: #fff; font-weight: normal; font-size: 10.700px; }
```
